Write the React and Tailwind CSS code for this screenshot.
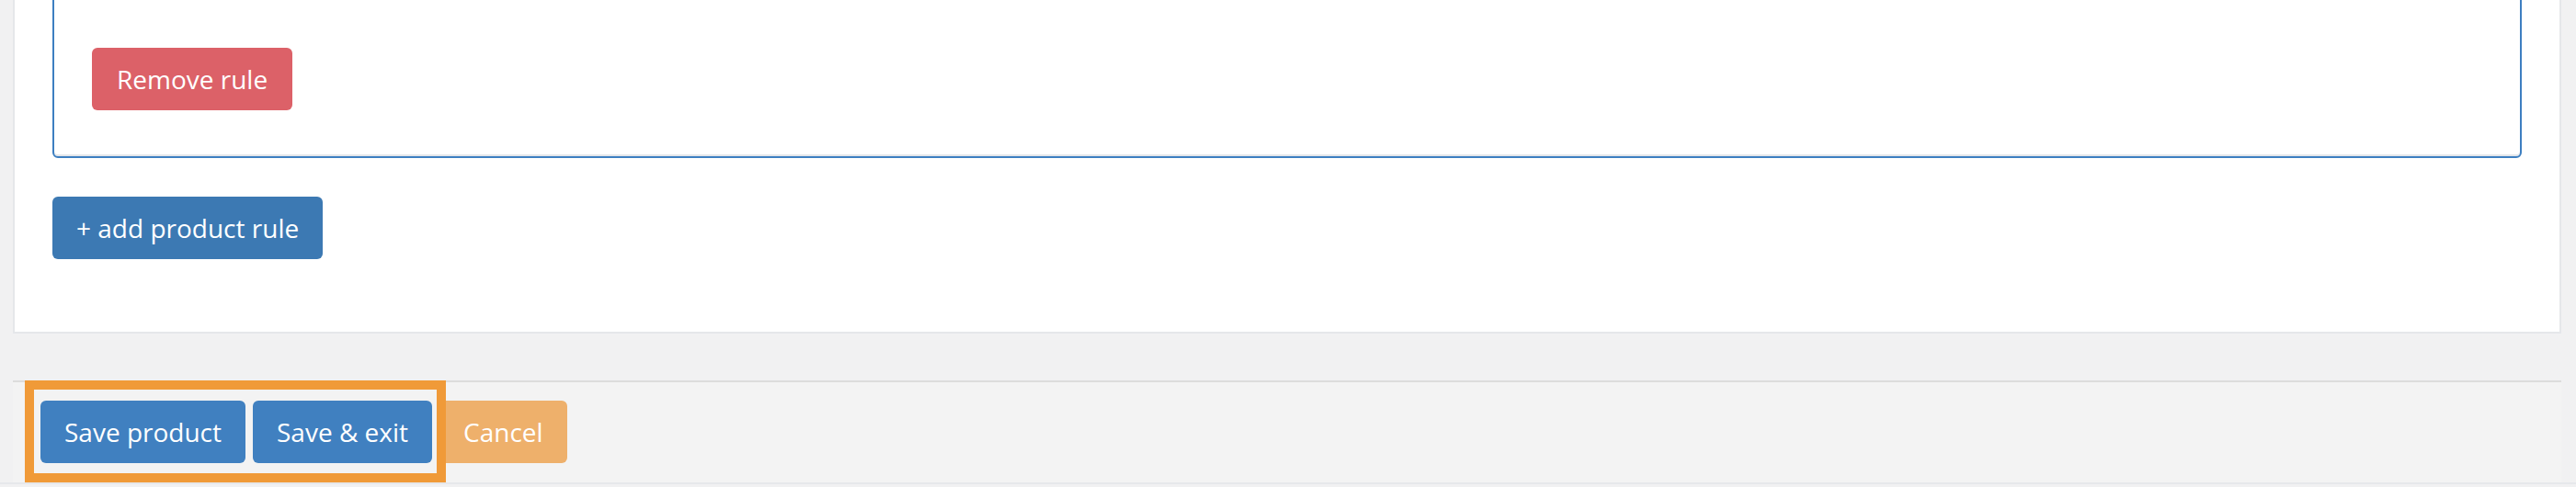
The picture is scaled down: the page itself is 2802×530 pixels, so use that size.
import React from 'react';

const font = { fontFamily: '"Open Sans", "Noto Sans", sans-serif' };

const App = () => {
  return (
    <div className="relative w-full h-[530px] overflow-hidden bg-[#f1f1f2]" style={font}>
      <div className="ml-[14px] mr-[16px] -mt-[100px] pt-[20px] px-[41px] pb-[79px] bg-white border-2 border-t-0 border-[#e5e7ea]">
        <div className="border-2 border-[#3d7fc1] rounded-[6px] pt-[130px] pb-[50px] pl-[41px] shadow-[inset_0_-2px_0_#e3e6ea]">
          <button className="h-[68px] px-[27px] rounded-[6px] bg-[#dc6168] text-white text-[28px] leading-none">
            Remove rule
          </button>
        </div>
        <button className="mt-[42px] h-[68px] px-[26px] rounded-[6px] bg-[#3c79b3] text-white text-[28px] leading-none">
          + add product rule
        </button>
      </div>

      <div className="mt-[51px] ml-[14px] mr-[16px] border-t-2 border-[#dcdcdc] bg-[#f3f3f3] pt-[20px] pb-[21px] pl-[30px] flex gap-[8px]">
        <button className="h-[68px] px-[26px] rounded-[6px] bg-[#4080c0] text-white text-[28px] leading-none">
          Save product
        </button>
        <button className="h-[68px] px-[26px] rounded-[6px] bg-[#4080c0] text-white text-[28px] leading-none">
          Save &amp; exit
        </button>
        <button className="h-[68px] px-[26px] rounded-[6px] bg-[#eeb06b] text-white text-[28px] leading-none">
          Cancel
        </button>
      </div>
      <div className="h-[2px] bg-[#e6e8eb]" />

      <div className="absolute left-[27px] top-[414px] w-[458px] h-[111px] border-[10px] border-[#f09a38] pointer-events-none" />
    </div>
  );
};

export default App;
